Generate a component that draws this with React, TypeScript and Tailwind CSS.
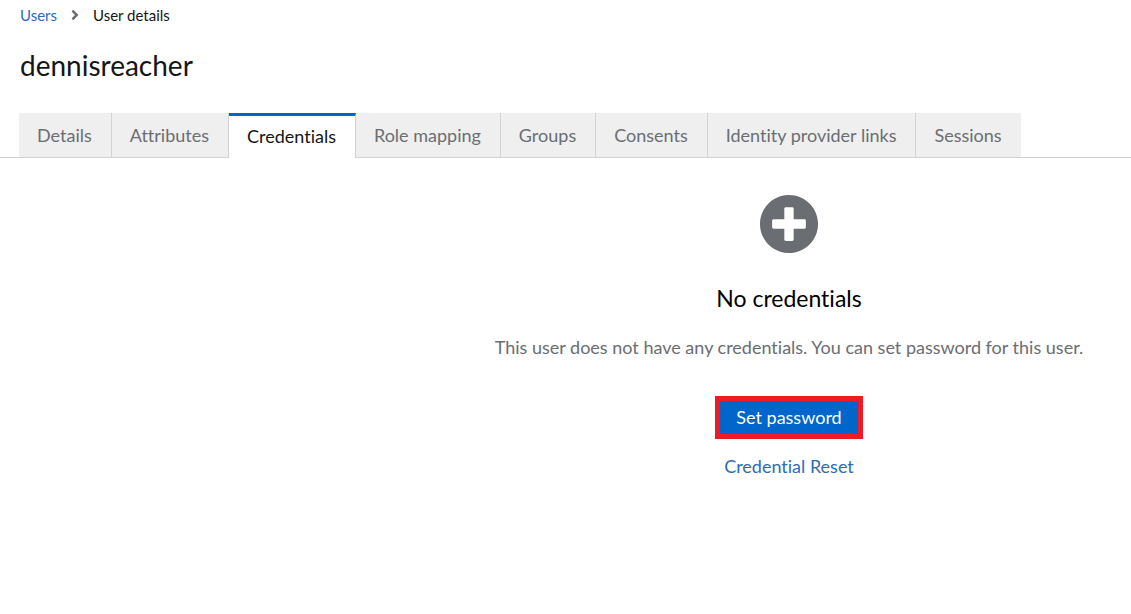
import { FaAngleRight, FaPlusCircle } from "react-icons/fa";

const tabs = [
  "Details",
  "Attributes",
  "Credentials",
  "Role mapping",
  "Groups",
  "Consents",
  "Identity provider links",
  "Sessions",
];

function Breadcrumb() {
  return (
    <nav aria-label="Breadcrumb" className="px-5 pt-[3px]">
      <ol className="flex items-center text-[15px] leading-6">
        <li>
          <a href="#users" className="text-[#2b6cb8]">
            Users
          </a>
        </li>
        <li aria-hidden="true" className="px-[10px]">
          <FaAngleRight className="size-4 text-[#6a6e73]" />
        </li>
        <li aria-current="page">User details</li>
      </ol>
    </nav>
  );
}

function Tabs() {
  return (
    <div role="tablist" className="mt-[30px] flex border-b border-[#d2d2d2] pl-[19px]">
      {tabs.map((tab, index) => {
        const selected = tab === "Credentials";
        const last = index === tabs.length - 1;
        return (
          <button
            key={tab}
            type="button"
            role="tab"
            aria-selected={selected}
            className={
              selected
                ? "-mb-px h-[45px] whitespace-nowrap border-t-[3px] border-r border-t-[#06c] border-r-[#d2d2d2] bg-white pr-[19px] pb-[3px] pl-[18px] text-lg leading-6"
                : last
                  ? "h-11 whitespace-nowrap bg-[#efefef] pr-[19px] pl-[18px] text-lg leading-6 text-[#6a6e73]"
                  : "h-11 whitespace-nowrap border-r border-[#d2d2d2] bg-[#efefef] pr-[19px] pl-[18px] text-lg leading-6 text-[#6a6e73]"
            }
          >
            {tab}
          </button>
        );
      })}
    </div>
  );
}

function EmptyState() {
  return (
    <section className="flex flex-col items-center pt-9 pl-[447px] text-lg leading-7">
      <FaPlusCircle className="size-[60px] text-[#6a6e73]" />
      <h2 className="mt-7 text-[23px] leading-8 text-black">No credentials</h2>
      <p className="mt-[19px] whitespace-nowrap text-[#6a6e73]">
        This user does not have any credentials. You can set password for this user.
      </p>
      <button
        type="button"
        className="mt-[35px] h-[43px] border-[5px] border-[#ed1c24] bg-[#06c] px-4 pb-[2px] text-white"
      >
        Set password
      </button>
      <a href="#credential-reset" className="mt-[13px] text-[#2b6cb8]">
        Credential Reset
      </a>
    </section>
  );
}

export default function App() {
  return (
    <main className="min-h-screen overflow-x-hidden bg-white font-['Lato','Open_Sans',sans-serif] text-[#151515] [font-variant-ligatures:none]">
      <Breadcrumb />
      <h1 className="mt-5 px-5 text-[28px] leading-9">dennisreacher</h1>
      <Tabs />
      <EmptyState />
    </main>
  );
}
